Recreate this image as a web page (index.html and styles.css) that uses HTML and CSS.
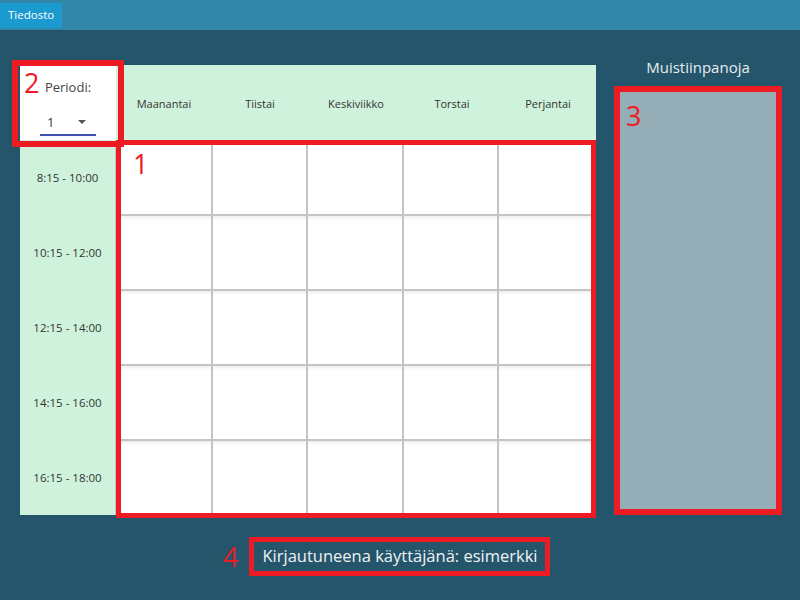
FILE: index.html
```html
<!DOCTYPE html>
<html lang="fi">
<head>
<meta charset="utf-8">
<title>Lukujärjestys</title>
<link rel="stylesheet" href="styles.css">
</head>
<body>
<div class="app">
  <div class="menubar">
    <div class="menu-item">Tiedosto</div>
  </div>
  <div class="content">
    <div class="schedule">
      <div class="corner">
        <div class="period-label">Periodi:</div>
        <div class="combo">
          <span class="combo-value">1</span>
          <span class="combo-arrow"></span>
        </div>
      </div>
      <div class="days">
        <div class="day">Maanantai</div>
        <div class="day">Tiistai</div>
        <div class="day">Keskiviikko</div>
        <div class="day">Torstai</div>
        <div class="day">Perjantai</div>
      </div>
      <div class="times">
        <div class="time">8:15 - 10:00</div>
        <div class="time">10:15 - 12:00</div>
        <div class="time">12:15 - 14:00</div>
        <div class="time">14:15 - 16:00</div>
        <div class="time">16:15 - 18:00</div>
      </div>
      <div class="cells">
        <div class="cell"></div><div class="cell"></div><div class="cell"></div><div class="cell"></div><div class="cell"></div>
        <div class="cell"></div><div class="cell"></div><div class="cell"></div><div class="cell"></div><div class="cell"></div>
        <div class="cell"></div><div class="cell"></div><div class="cell"></div><div class="cell"></div><div class="cell"></div>
        <div class="cell"></div><div class="cell"></div><div class="cell"></div><div class="cell"></div><div class="cell"></div>
        <div class="cell"></div><div class="cell"></div><div class="cell"></div><div class="cell"></div><div class="cell"></div>
      </div>
    </div>
    <div class="notes">
      <div class="notes-title">Muistiinpanoja</div>
      <div class="notes-panel"></div>
    </div>
  </div>
  <div class="footer">
    <span class="login-text">Kirjautuneena käyttäjänä: esimerkki</span>
  </div>

  <div class="mark mark-1"><span class="mark-num">1</span></div>
  <div class="mark mark-2"><span class="mark-num">2</span></div>
  <div class="mark mark-3"><span class="mark-num">3</span></div>
  <div class="mark mark-4"><span class="mark-num">4</span></div>
</div>
</body>
</html>
```

FILE: styles.css
```css
* { box-sizing: border-box; }

html, body {
  margin: 0;
  padding: 0;
}

body {
  width: 800px;
  height: 600px;
  background: #25556a;
  font-family: "Open Sans", "Noto Sans", sans-serif;
  overflow: hidden;
}

.app {
  position: relative;
  width: 800px;
  height: 600px;
  display: flex;
  flex-direction: column;
}

.menubar {
  height: 30px;
  background: #3186aa;
  padding-top: 3px;
  display: flex;
}

.menu-item {
  height: 25px;
  width: 62px;
  background: #1b9ad0;
  color: #ffffff;
  font-size: 11.5px;
  line-height: 24px;
  padding-left: 8px;
}

.content {
  display: flex;
  padding-left: 20px;
}

.schedule {
  margin-top: 35px;
  display: grid;
  grid-template-columns: 96px 480px;
  grid-template-rows: 75px 375px;
}

.corner {
  background: #ffffff;
  display: flex;
  flex-direction: column;
  align-items: center;
  padding-top: 13px;
}

.period-label {
  font-size: 13px;
  color: #444444;
  line-height: 18px;
}

.combo {
  margin-top: 15px;
  width: 56px;
  height: 25px;
  border-bottom: 2px solid #3f51b5;
  display: flex;
  align-items: center;
  justify-content: space-between;
  padding: 0 10px 2px 7px;
}

.combo-value {
  font-size: 13px;
  color: #333333;
}

.combo-arrow {
  width: 0;
  height: 0;
  border-left: 4px solid transparent;
  border-right: 4px solid transparent;
  border-top: 4px solid #555555;
}

.days {
  background: #cff2dc;
  display: flex;
}

.day {
  flex: 1;
  display: flex;
  align-items: center;
  justify-content: center;
  font-size: 11px;
  color: #333333;
  padding-top: 1px;
}

.times {
  background: #cff2dc;
  display: grid;
  grid-template-rows: repeat(5, 75px);
  border-right: 1px solid #b9c9bf;
}

.time {
  display: flex;
  align-items: center;
  justify-content: center;
  font-size: 11.5px;
  color: #333333;
}

.cells {
  width: 478px;
  display: grid;
  grid-template-columns: repeat(5, 1fr);
  grid-template-rows: repeat(5, 75px);
  background: #ffffff;
}

.cell {
  border: 1px solid #c4c4c4;
  background: #ffffff;
  box-shadow: inset 0 4px 4px -3px rgba(0, 0, 0, 0.1);
}

.notes {
  margin-left: 23px;
  width: 158px;
  display: flex;
  flex-direction: column;
}

.notes-title {
  margin-top: 26px;
  text-align: center;
  color: #e6eef1;
  font-size: 15px;
  line-height: 22px;
}

.notes-panel {
  margin-top: 13px;
  height: 419px;
  background: #95adb6;
  border: 1px solid #8aa1ab;
}

.footer {
  margin-top: 28px;
  text-align: center;
}

.login-text {
  color: #eef3f5;
  font-size: 16.5px;
  line-height: 26px;
}

/* red annotation overlays */
.mark {
  position: absolute;
  border: 6px solid #ed1c24;
}

.mark-num {
  position: absolute;
  color: #ed1c24;
  font-size: 27px;
  line-height: 27px;
}

.mark-1 { left: 116px; top: 140px; width: 480px; height: 378px; border-width: 5px; }
.mark-1 .mark-num { left: 12px; top: 5px; }

.mark-2 { left: 12px; top: 60px; width: 112px; height: 87px; }
.mark-2 .mark-num { left: 6px; top: 3px; }

.mark-3 { left: 614px; top: 86px; width: 168px; height: 429px; }
.mark-3 .mark-num { left: 6px; top: 10px; }

.mark-4 { left: 249px; top: 537px; width: 301px; height: 39px; border-width: 5px; }
.mark-4 .mark-num { left: -31px; top: 1px; }
```
